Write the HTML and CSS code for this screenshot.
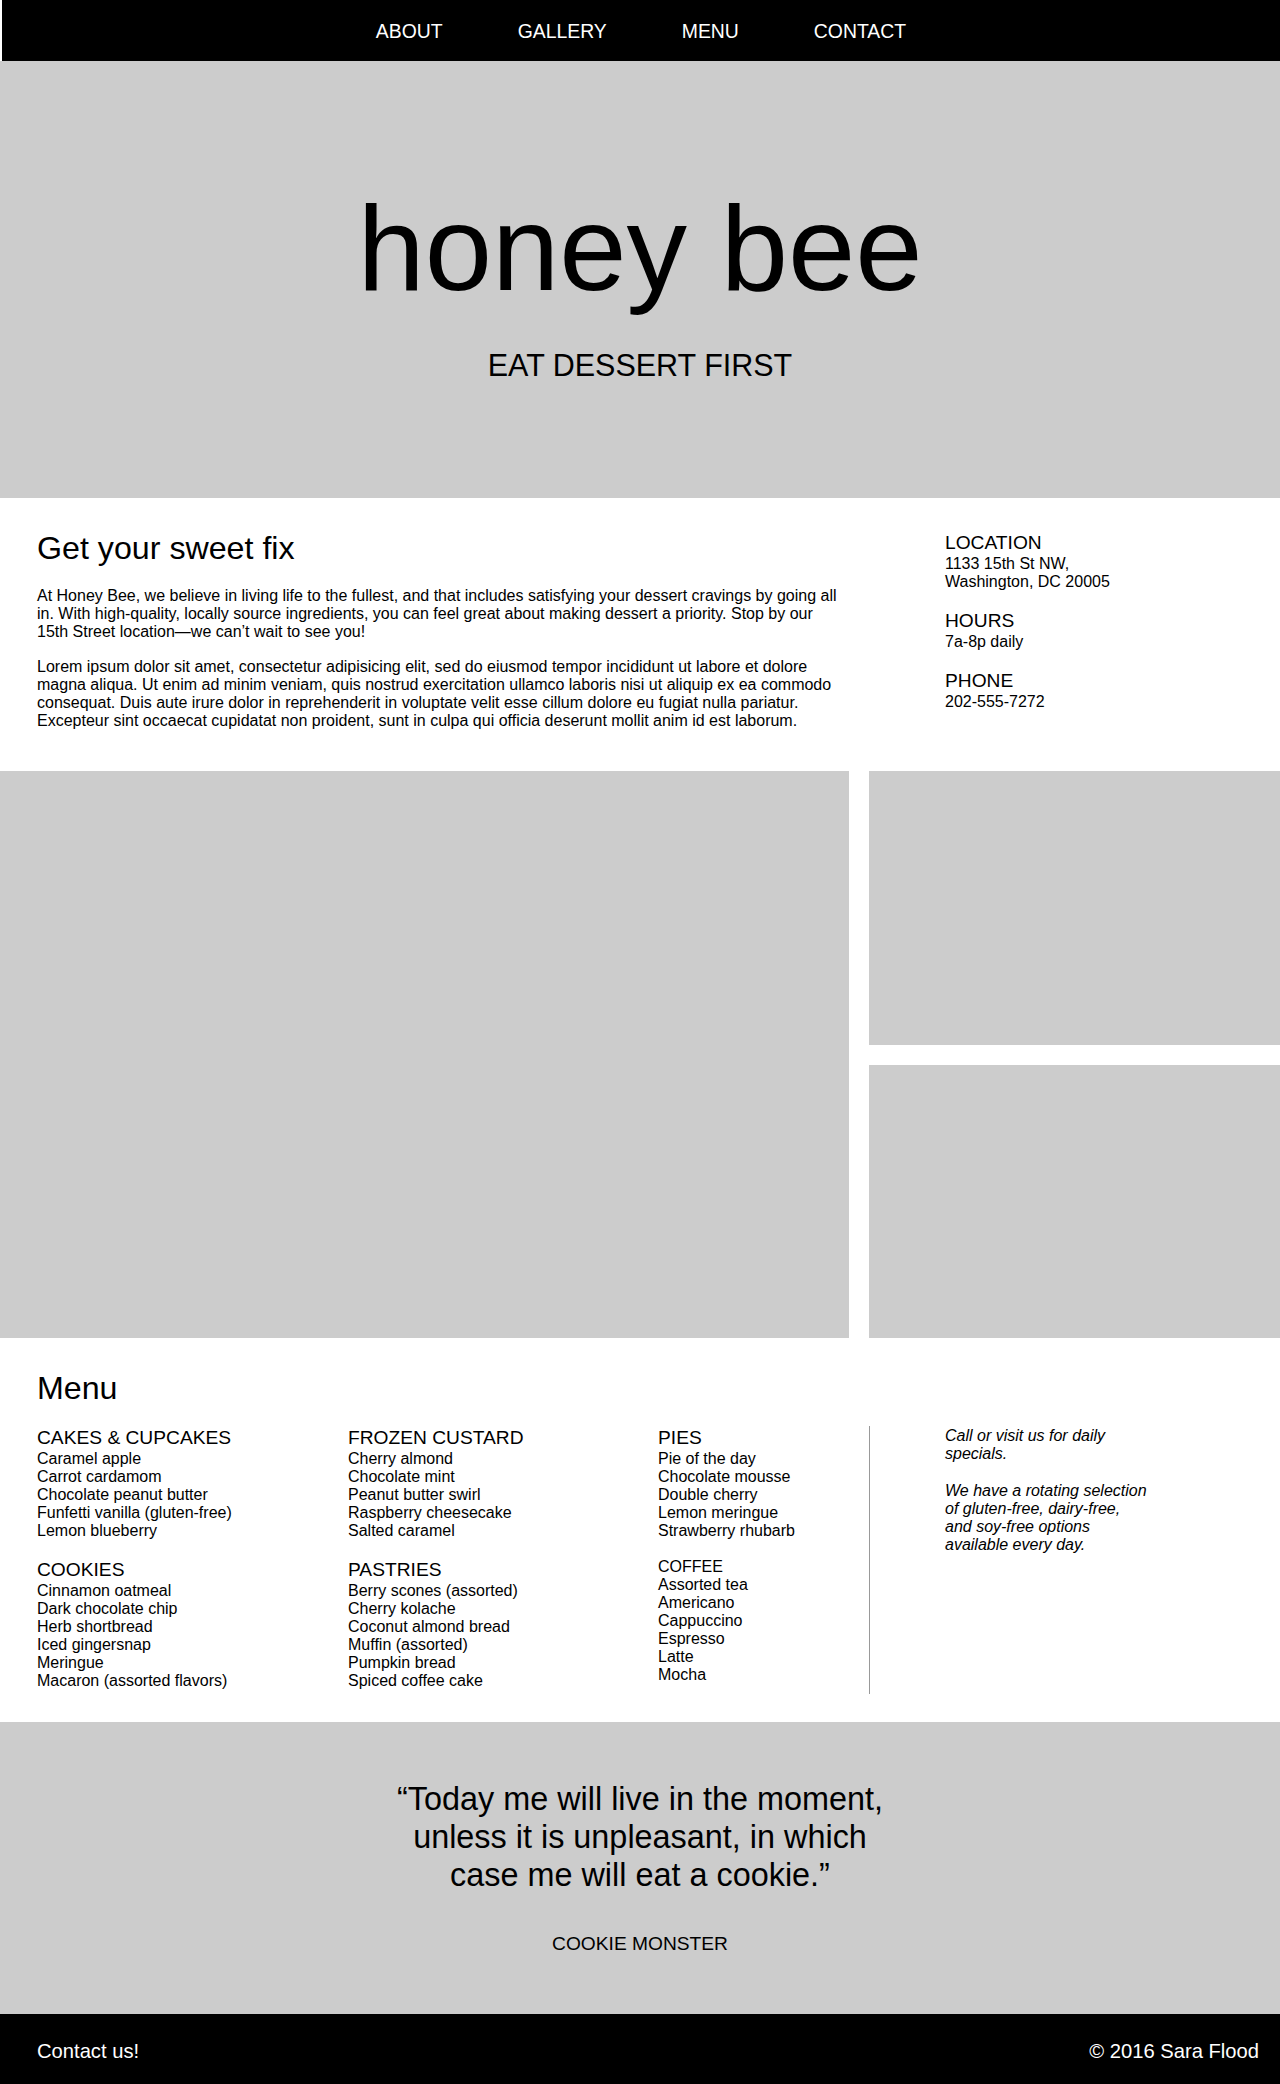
FILE: index.html
```html
<!DOCTYPE html>
<html lang="en">
<head>
<meta charset="utf-8">
<title>Honey Bee</title>
<link rel="stylesheet" href="styles.css">
</head>
<body>
<nav class="topnav">
  <a class="topnav-link" href="#about">ABOUT</a>
  <a class="topnav-link" href="#gallery">GALLERY</a>
  <a class="topnav-link" href="#menu">MENU</a>
  <a class="topnav-link" href="#contact">CONTACT</a>
</nav>

<header class="hero">
  <h1 class="hero-title">honey bee</h1>
  <p class="hero-tagline">EAT DESSERT FIRST</p>
</header>

<section class="about split" id="about">
  <div class="about-main">
    <h2 class="section-title">Get your sweet fix</h2>
    <p class="body-text">At Honey Bee, we believe in living life to the fullest, and that includes satisfying your dessert cravings by going all in. With high-quality, locally source ingredients, you can feel great about making dessert a priority. Stop by our 15th&nbsp;Street location—we can’t wait to see you!</p>
    <p class="body-text">Lorem ipsum dolor sit amet, consectetur adipisicing elit, sed do eiusmod tempor incididunt ut labore et dolore magna aliqua. Ut enim ad minim veniam, quis nostrud exercitation ullamco laboris nisi ut aliquip ex ea commodo consequat. Duis aute irure dolor in reprehenderit in voluptate velit esse cillum dolore eu fugiat nulla pariatur. Excepteur sint occaecat cupidatat non proident, sunt in culpa qui officia deserunt mollit anim id est laborum.</p>
  </div>
  <div class="about-side">
    <div class="info-block">
      <h3 class="small-title">LOCATION</h3>
      <p class="info-text">1133 15th St NW,<br>Washington, DC 20005</p>
    </div>
    <div class="info-block">
      <h3 class="small-title">HOURS</h3>
      <p class="info-text">7a-8p daily</p>
    </div>
    <div class="info-block">
      <h3 class="small-title">PHONE</h3>
      <p class="info-text">202-555-7272</p>
    </div>
  </div>
</section>

<section class="gallery split" id="gallery">
  <div class="photo photo-large"></div>
  <div class="photo"></div>
  <div class="photo"></div>
</section>

<section class="menu" id="menu">
  <h2 class="section-title menu-title">Menu</h2>
  <div class="menu-body split">
    <div class="menu-cols">
      <div class="menu-col">
        <div class="menu-group">
          <h3 class="small-title">CAKES &amp; CUPCAKES</h3>
          <ul class="menu-list">
            <li>Caramel apple</li>
            <li>Carrot cardamom</li>
            <li>Chocolate peanut butter</li>
            <li>Funfetti vanilla (gluten-free)</li>
            <li>Lemon blueberry</li>
          </ul>
        </div>
        <div class="menu-group">
          <h3 class="small-title">COOKIES</h3>
          <ul class="menu-list">
            <li>Cinnamon oatmeal</li>
            <li>Dark chocolate chip</li>
            <li>Herb shortbread</li>
            <li>Iced gingersnap</li>
            <li>Meringue</li>
            <li>Macaron (assorted flavors)</li>
          </ul>
        </div>
      </div>
      <div class="menu-col">
        <div class="menu-group">
          <h3 class="small-title">FROZEN CUSTARD</h3>
          <ul class="menu-list">
            <li>Cherry almond</li>
            <li>Chocolate mint</li>
            <li>Peanut butter swirl</li>
            <li>Raspberry cheesecake</li>
            <li>Salted caramel</li>
          </ul>
        </div>
        <div class="menu-group">
          <h3 class="small-title">PASTRIES</h3>
          <ul class="menu-list">
            <li>Berry scones (assorted)</li>
            <li>Cherry kolache</li>
            <li>Coconut almond bread</li>
            <li>Muffin (assorted)</li>
            <li>Pumpkin bread</li>
            <li>Spiced coffee cake</li>
          </ul>
        </div>
      </div>
      <div class="menu-col">
        <div class="menu-group">
          <h3 class="small-title">PIES</h3>
          <ul class="menu-list">
            <li>Pie of the day</li>
            <li>Chocolate mousse</li>
            <li>Double cherry</li>
            <li>Lemon meringue</li>
            <li>Strawberry rhubarb</li>
          </ul>
        </div>
        <div class="menu-group menu-group-plain">
          <h3 class="plain-title">COFFEE</h3>
          <ul class="menu-list">
            <li>Assorted tea</li>
            <li>Americano</li>
            <li>Cappuccino</li>
            <li>Espresso</li>
            <li>Latte</li>
            <li>Mocha</li>
          </ul>
        </div>
      </div>
    </div>
    <aside class="specials">
      <p class="specials-text">Call or visit us for daily specials.</p>
      <p class="specials-text">We have a rotating selection of gluten-free, dairy-free, and soy-free options available every day.</p>
    </aside>
  </div>
</section>

<section class="quote">
  <blockquote class="quote-text">“Today me will live in the moment, unless it is unpleasant, in which case me will eat a cookie.”</blockquote>
  <p class="quote-author">COOKIE MONSTER</p>
</section>

<footer class="footer" id="contact">
  <span class="footer-text">Contact us!</span>
  <span class="footer-text">© 2016 Sara Flood</span>
</footer>
</body>
</html>
```

FILE: styles.css
```css
* {
  box-sizing: border-box;
}

html, body {
  margin: 0;
  padding: 0;
  background: #ffffff;
}

body {
  font-family: "Liberation Sans", Arial, Helvetica, sans-serif;
  font-size: 16px;
  line-height: 18px;
  color: #000000;
}

p, h1, h2, h3, ul, blockquote {
  margin: 0;
  padding: 0;
}

/* Navigation */
.topnav {
  margin-left: 2px;
  background: #000000;
  display: flex;
  justify-content: center;
  gap: 75px;
  padding: 20px 0 19px;
}

.topnav-link {
  color: #ffffff;
  text-decoration: none;
  font-size: 19.4px;
  line-height: 22px;
}

/* Hero */
.hero {
  background: #cccccc;
  text-align: center;
  padding: 127px 0 117.5px;
}

.hero-title {
  font-size: 121px;
  line-height: 120px;
  font-weight: normal;
}

.hero-tagline {
  margin-top: 42px;
  font-size: 30.5px;
  line-height: 30.5px;
}

/* Shared two-part layout */
.split {
  display: grid;
  grid-template-columns: 849fr 411fr;
  column-gap: 20px;
}

.section-title {
  font-size: 32.2px;
  line-height: 37px;
  font-weight: normal;
}

.small-title {
  font-size: 19.2px;
  line-height: 24px;
  font-weight: normal;
}

/* About */
.about {
  padding: 32px 0 41.5px;
}

.about-main {
  padding-left: 37px;
}

.about-main .section-title {
  margin-bottom: 19.5px;
}

.body-text + .body-text {
  margin-top: 17px;
}

.about-side {
  padding-left: 76px;
  padding-top: 0.5px;
}

.info-block + .info-block {
  margin-top: 18px;
}

/* Gallery */
.gallery {
  grid-template-rows: 273.5px 273.5px;
  row-gap: 20px;
}

.photo {
  background: #cccccc;
}

.photo-large {
  grid-row: 1 / 3;
}

/* Menu */
.menu {
  padding: 32px 0 28px;
}

.menu-title {
  padding-left: 37px;
  margin-bottom: 19px;
}

.menu-cols {
  display: grid;
  grid-template-columns: 311px 310px 1fr;
  padding-left: 37px;
  padding-bottom: 4px;
}

.menu-group + .menu-group {
  margin-top: 18px;
}

.menu-group-plain {
  margin-top: 18px !important;
}

.plain-title {
  font-size: 16px;
  line-height: 18px;
  font-weight: normal;
}

.menu-list {
  list-style: none;
}

.specials {
  border-left: 1px solid #999999;
  padding-left: 75px;
  padding-top: 1px;
}

.specials-text {
  font-style: italic;
  max-width: 204px;
}

.specials-text + .specials-text {
  margin-top: 19px;
}

/* Quote */
.quote {
  background: #cccccc;
  text-align: center;
  padding: 57.5px 0 59.5px;
}

.quote-text {
  width: 500px;
  margin: 0 auto;
  font-size: 32.4px;
  line-height: 38px;
}

.quote-author {
  margin-top: 39px;
  font-size: 19.2px;
  line-height: 22px;
}

/* Footer */
.footer {
  background: #000000;
  color: #ffffff;
  display: flex;
  justify-content: space-between;
  padding: 25px 21px 21px 37px;
}

.footer-text {
  font-size: 20.2px;
  line-height: 24px;
}
```
